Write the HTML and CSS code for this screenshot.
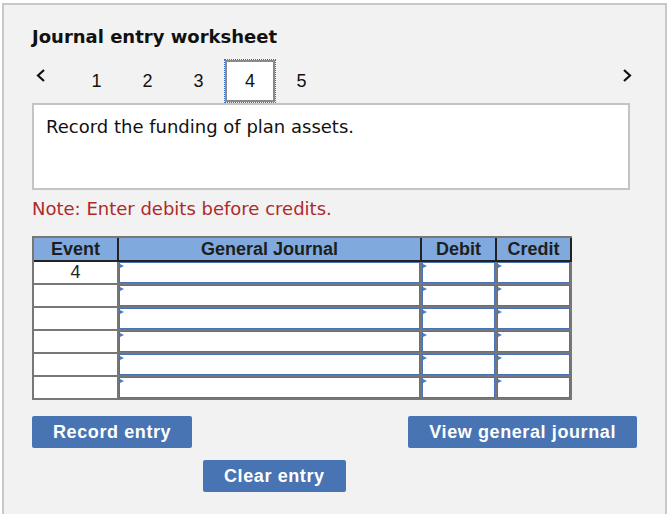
FILE: index.html
```html
<!DOCTYPE html>
<html>
<head>
<meta charset="utf-8">
<link rel="stylesheet" href="styles.css">
</head>
<body>
<div class="panel">
  <h1 class="title">Journal entry worksheet</h1>
  <div class="nav">
    <div class="prev"><svg width="10" height="13" viewBox="0 0 10 13"><polyline points="8,1 2,6.5 8,12" fill="none" stroke="#111" stroke-width="2.2"/></svg></div>
    <div class="num">1</div>
    <div class="num">2</div>
    <div class="num">3</div>
    <div class="num active"><span class="box">4</span></div>
    <div class="num">5</div>
    <div class="spacer"></div>
    <div class="next"><svg width="10" height="13" viewBox="0 0 10 13"><polyline points="2,1 8,6.5 2,12" fill="none" stroke="#111" stroke-width="2.2"/></svg></div>
  </div>
  <div class="desc">Record the funding of plan assets.</div>
  <div class="note">Note: Enter debits before credits.</div>
  <div class="jt">
    <div class="th first">Event</div>
    <div class="th">General Journal</div>
    <div class="th">Debit</div>
    <div class="th last">Credit</div>

    <div class="ev">4</div><div class="inp"></div><div class="inp"></div><div class="inp"></div>
    <div class="ev"></div><div class="inp"></div><div class="inp"></div><div class="inp"></div>
    <div class="ev"></div><div class="inp"></div><div class="inp"></div><div class="inp"></div>
    <div class="ev"></div><div class="inp"></div><div class="inp"></div><div class="inp"></div>
    <div class="ev"></div><div class="inp"></div><div class="inp"></div><div class="inp"></div>
    <div class="ev"></div><div class="inp"></div><div class="inp"></div><div class="inp"></div>
  </div>
  <div class="btnrow">
    <button class="btn">Record entry</button>
    <button class="btn">View general journal</button>
  </div>
  <div class="btnrow2">
    <button class="btn">Clear entry</button>
  </div>
</div>
</body>
</html>
```
FILE: styles.css
```css
html, body {
  margin: 0;
  padding: 0;
  background: #ffffff;
}
.panel {
  margin: 3px 0 0 2px;
  width: 665px;
  height: 530px;
  box-sizing: border-box;
  border: 2px solid #c8c8c8;
  background: #f2f2f2;
  padding: 21px 28px 0 28px;
  font-family: "DejaVu Sans", Verdana, sans-serif;
  color: #111;
}
.title {
  margin: 0;
  font-size: 18px;
  line-height: 22px;
  font-weight: bold;
  color: #111;
}
.nav {
  margin-top: 11px;
  height: 44px;
  display: flex;
  align-items: center;
  font-family: "Liberation Sans", Arial, sans-serif;
  font-size: 18px;
}
.prev {
  width: 39px;
  align-self: flex-start;
  margin-top: 10px;
  display: flex;
}
.prev svg {
  margin-left: 4px;
}
.next {
  align-self: flex-start;
  margin-top: 10px;
  margin-right: 5px;
  display: flex;
}
.num {
  width: 51px;
  height: 44px;
  display: flex;
  align-items: center;
  justify-content: center;
  color: #111;
}
.num.active {
  width: 52px;
}
.box {
  width: 50px;
  height: 42px;
  box-sizing: border-box;
  border: 2px solid #8a8a8a;
  outline: 1px dotted #3a70c8;
  background: #ffffff;
  display: flex;
  align-items: center;
  justify-content: center;
}
.spacer {
  flex: 1;
}
.desc {
  width: 598px;
  height: 87px;
  box-sizing: border-box;
  border: 2px solid #c4c4c4;
  background: #ffffff;
  padding: 11px 12px 0 12px;
  font-size: 18px;
  line-height: 22px;
  color: #111;
}
.note {
  margin-top: 8px;
  font-size: 18px;
  line-height: 22px;
  color: #ae2a2a;
}
.jt {
  margin-top: 16px;
  display: grid;
  grid-template-columns: 83px 301px 73px 73px;
  grid-auto-rows: 21px;
  grid-template-rows: 22px;
  gap: 2px;
  padding: 2px;
  background: #777777;
  width: max-content;
  font-family: "Liberation Sans", Arial, sans-serif;
  font-size: 18px;
}
.th {
  background: #80aadd;
  font-weight: bold;
  color: #1e1e1e;
  display: flex;
  align-items: center;
  justify-content: center;
  box-shadow: 0 2px 0 #222, -2px 0 0 #222, -2px 2px 0 #222;
}
.th.first {
  box-shadow: 0 2px 0 #222;
}
.th.last {
  box-shadow: 0 2px 0 #222, -2px 0 0 #222, -2px 2px 0 #222, 2px 0 0 #222, 2px 2px 0 #222;
}
.ev {
  background: #ffffff;
  display: flex;
  align-items: center;
  justify-content: center;
  color: #222;
}
.inp {
  position: relative;
  background: #ffffff;
  border: 1px solid #4a72b6;
  box-sizing: border-box;
}
.inp::before {
  content: "";
  position: absolute;
  left: 0;
  top: 1px;
  width: 0;
  height: 0;
  border-left: 4px solid #4a7cc8;
  border-top: 2.5px solid transparent;
  border-bottom: 2.5px solid transparent;
}
.btnrow {
  margin-top: 16px;
  display: flex;
  justify-content: space-between;
}
.btnrow2 {
  margin-top: 12px;
  padding-left: 171px;
  display: flex;
}
.btn {
  height: 32px;
  padding: 0 21px;
  border: none;
  border-radius: 2px;
  background: #4874b4;
  color: #ffffff;
  font-family: "Liberation Sans", Arial, sans-serif;
  font-size: 18px;
  font-weight: bold;
  letter-spacing: 0.6px;
}
```
